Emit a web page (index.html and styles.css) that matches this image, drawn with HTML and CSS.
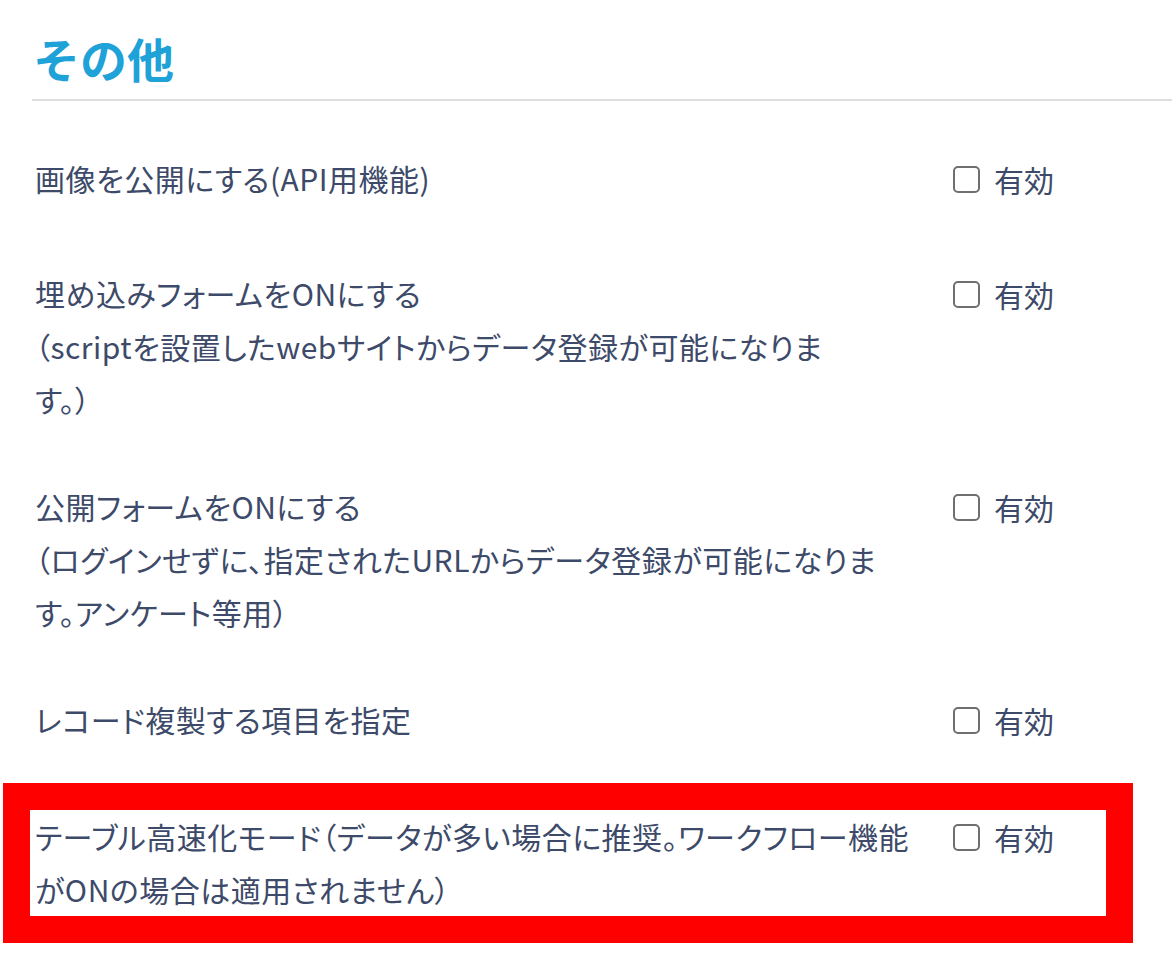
FILE: index.html
```html
<!DOCTYPE html>
<html lang="ja">
<head>
    <meta charset="UTF-8">
    <meta name="viewport" content="width=device-width, initial-scale=1.0">
    <title>その他 - 設定</title>
    <link rel="stylesheet" href="styles.css">
</head>
<body>
    <div class="section">
        <h2 class="section-title">その他</h2>

        <div class="options">
            <div class="option">
                <div class="option-label">画像を公開にする(API用機能)</div>
                <label class="option-check"><span class="box"></span>有効</label>
            </div>

            <div class="option">
                <div class="option-label">埋め込みフォームをONにする<br>（scriptを設置したwebサイトからデータ登録が可能になりま<br>す。）</div>
                <label class="option-check"><span class="box"></span>有効</label>
            </div>

            <div class="option">
                <div class="option-label">公開フォームをONにする<br>（ログインせずに、指定されたURLからデータ登録が可能になりま<br>す。アンケート等用）</div>
                <label class="option-check"><span class="box"></span>有効</label>
            </div>

            <div class="option">
                <div class="option-label">レコード複製する項目を指定</div>
                <label class="option-check"><span class="box"></span>有効</label>
            </div>

            <div class="option highlight">
                <div class="option-label">テーブル高速化モード（データが多い場合に推奨。ワークフロー機能<br>がONの場合は適用されません）</div>
                <label class="option-check"><span class="box"></span>有効</label>
            </div>
        </div>
    </div>
</body>
</html>
```

FILE: styles.css
```css
body {
    margin: 0;
    background-color: #fff;
    font-family: "Noto Sans CJK JP", "Noto Sans", sans-serif;
    color: #3d4a69;
}
.section {
    padding: 29px 0 0 32px;
}
.section-title {
    margin: 0;
    padding: 0 0 12px 1px;
    font-size: 47px;
    line-height: 58px;
    font-weight: bold;
    color: #1fa2d8;
    border-bottom: 2px solid #dedede;
}
.options {
    display: flex;
    flex-direction: column;
    gap: 54px;
    margin-top: 51px;
    padding-left: 3px;
}
.option {
    display: grid;
    grid-template-columns: 890px auto;
    column-gap: 27px;
    align-items: start;
    min-height: 61px;
}
.option-label {
    font-size: 30px;
    line-height: 53px;
    letter-spacing: 0.5px;
    font-feature-settings: "palt";
    white-space: nowrap;
}
.option-check {
    display: flex;
    align-items: center;
    gap: 14px;
    height: 53px;
    font-size: 30px;
    cursor: pointer;
}
.box {
    width: 23px;
    height: 23px;
    border: 2.5px solid #6f6f6f;
    border-radius: 5px;
    margin-left: 1px;
    margin-top: 2px;
}
.highlight {
    min-height: 0;
    margin: -25px 39px 0 -32px;
    padding-left: 5px;
    border: 27px solid #ff0000;
}
```
